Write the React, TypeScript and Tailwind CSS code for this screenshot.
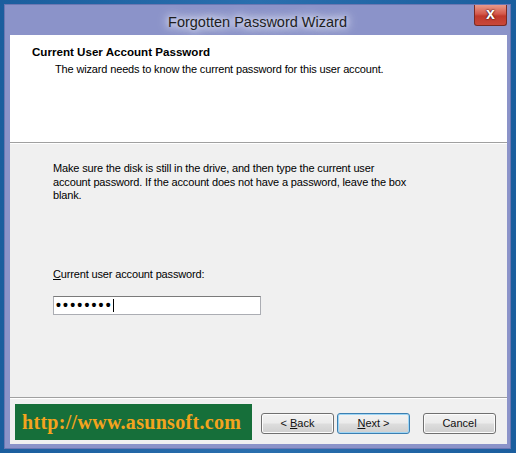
import React from "react";

const sans = "font-['Liberation_Sans',Arial,sans-serif]";

function WizButton({
  children,
  primary,
}: {
  children: React.ReactNode;
  primary?: boolean;
}) {
  return (
    <button
      className={
        "w-[73px] h-[21px] rounded-[3px] border text-[11px] text-[#111] leading-none bg-[linear-gradient(#f2f2f2_0%,#ebebeb_48%,#dddddd_52%,#cfcfcf_100%)] " +
        (primary
          ? "border-[#3c7fb1] shadow-[inset_0_0_0_1px_#9fd6f5]"
          : "border-[#707070] shadow-[inset_0_0_0_1px_#fcfcfc]")
      }
    >
      {children}
    </button>
  );
}

export default function App() {
  return (
    <div
      className={`w-[516px] h-[453px] bg-[linear-gradient(90deg,#1b5e9e,#2a6fae_50%,#1b5e9e)] pt-[4px] pl-[4px] ${sans}`}
    >
      <div className="w-[507px] h-[445px] bg-[#8b93c9] border border-[#6b77b3] flex flex-col">
        {/* title bar */}
        <div className="h-[30px] flex items-start relative">
          <div className="flex-1 flex justify-center pt-[8px]">
            <span className="text-[14.5px] text-[#1e1e1e] leading-[18px] [text-shadow:0_0_6px_#e8ecff,0_0_10px_#e8ecff,0_0_14px_#e8ecff]">
              Forgotten Password Wizard
            </span>
          </div>
          <div className="absolute right-[3px] top-0 w-[33px] h-[21px] rounded-b-[3px] border border-[#7a2a22] border-t-0 bg-[linear-gradient(#e99a8a_0%,#d4584a_45%,#c0392b_55%,#c9483a_100%)] flex items-center justify-center">
            <span className="text-white font-bold text-[16px] leading-none mt-[-2px] [text-shadow:0_0_1px_#3a0a05,0_0_2px_#3a0a05]">
              x
            </span>
          </div>
        </div>

        {/* client area */}
        <div className="ml-[5px] mr-[3px] mb-[4px] flex-1 flex flex-col bg-[#f0f0f0]">
          <div className="h-[108px] bg-white pt-[10px] border-b border-[#a0a0a0]">
            <div className="pl-[22px] text-[11.6px] leading-[14px] font-bold text-black">
              Current User Account Password
            </div>
            <div className="pl-[45px] mt-[3px] text-[11px] tracking-[-0.15px] leading-[14px] text-black">
              The wizard needs to know the current password for this user account.
            </div>
          </div>

          <div className="flex-1 border-t border-white pt-[18px] pl-[43px] border-b-[1px] border-b-[#a0a0a0]">
            <p className="w-[359px] text-[11px] tracking-[-0.15px] leading-[13.5px] text-black">
              Make sure the disk is still in the drive, and then type the current user
              account password. If the account does not have a password, leave the box
              blank.
            </p>
            <div className="mt-[64px] text-[11px] tracking-[-0.15px] leading-[14px] text-black">
              <span className="underline">C</span>urrent user account password:
            </div>
            <div className="mt-[15px] w-[208px] h-[19px] bg-white border border-[#abadb3] border-t-[#7a7a7a] flex items-center pl-[2px]">
              <span className="text-[14px] font-bold leading-none tracking-[2.2px] text-black">
                ••••••••
              </span>
              <span className="w-[1px] h-[13px] bg-black" />
            </div>
          </div>

          <div className="h-[46px] border-t border-white flex items-start pl-[5px] pr-[11px]">
            <div className="mt-[5px] w-[237px] h-[36px] bg-[#166f3a] flex items-center pl-[7px]">
              <span className="font-['Liberation_Serif','Times_New_Roman',serif] font-bold text-[20px] tracking-[0.3px] text-[#f3a41e] leading-none">
                http://www.asunsoft.com
              </span>
            </div>
            <div className="flex-1" />
            <div className="mt-[14px] flex items-center">
              <WizButton>
                &lt; <span className="underline">B</span>ack
              </WizButton>
              <div className="w-[3px]" />
              <WizButton primary>
                <span className="underline">N</span>ext &gt;
              </WizButton>
              <div className="w-[13px]" />
              <WizButton>Cancel</WizButton>
            </div>
          </div>
        </div>
      </div>
    </div>
  );
}
